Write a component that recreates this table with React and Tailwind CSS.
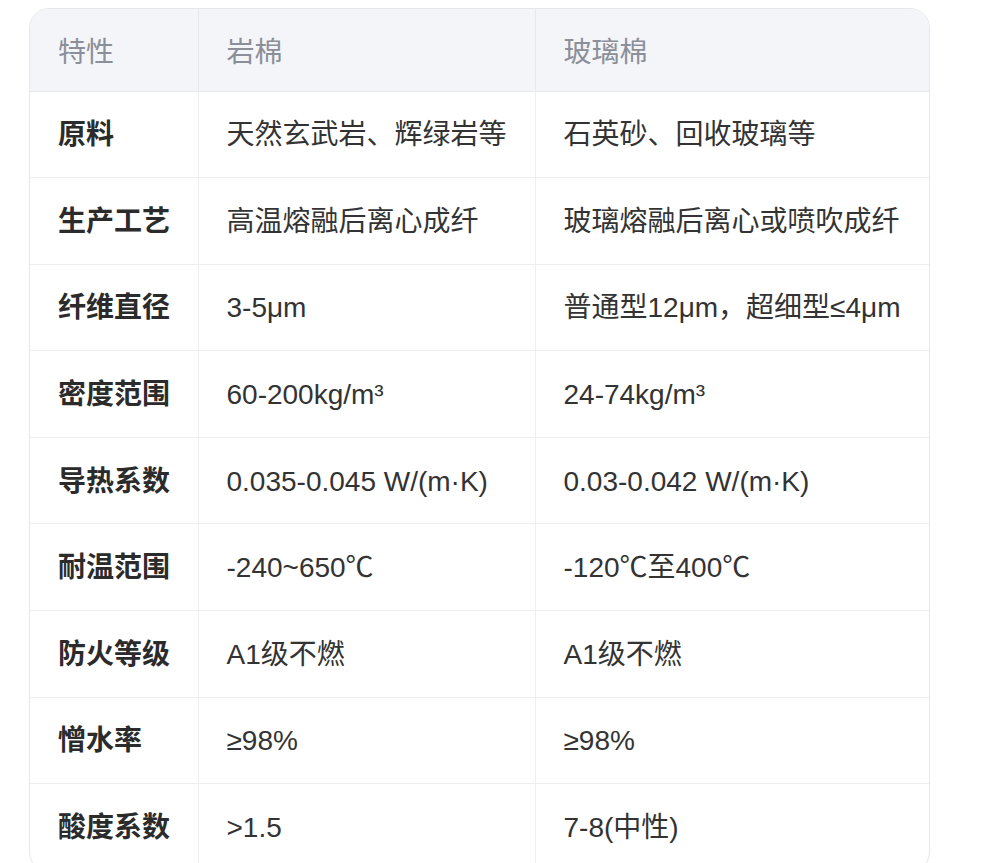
import React from "react";

const rows = [
  ["原料", "天然玄武岩、辉绿岩等", "石英砂、回收玻璃等"],
  ["生产工艺", "高温熔融后离心成纤", "玻璃熔融后离心或喷吹成纤"],
  ["纤维直径", "3-5μm", "普通型12μm，超细型≤4μm"],
  ["密度范围", "60-200kg/m³", "24-74kg/m³"],
  ["导热系数", "0.035-0.045 W/(m·K)", "0.03-0.042 W/(m·K)"],
  ["耐温范围", "-240~650℃", "-120℃至400℃"],
  ["防火等级", "A1级不燃", "A1级不燃"],
  ["憎水率", "≥98%", "≥98%"],
  ["酸度系数", ">1.5", "7-8(中性)"],
];

export default function App() {
  return (
    <div
      className="min-h-screen bg-white pl-[29px] pt-[8px]"
      style={{ fontFamily: '"Liberation Sans", "Noto Sans CJK SC", sans-serif' }}
    >
      <div className="w-[901px] rounded-[20px] border border-[#e6e7eb] overflow-hidden">
        <table className="w-full table-fixed border-collapse text-[28px]">
          <colgroup>
            <col className="w-[168px]" />
            <col className="w-[337px]" />
            <col />
          </colgroup>
          <thead>
            <tr className="h-[82px] bg-[#f4f5f8]">
              {["特性", "岩棉", "玻璃棉"].map((h, i) => (
                <th
                  key={h}
                  className={`pl-[28px] pr-0 pt-[6px] text-left font-normal text-[#8b8f99] border-b border-[#e8e9ec] whitespace-nowrap ${
                    i < 2 ? "border-r" : ""
                  }`}
                >
                  {h}
                </th>
              ))}
            </tr>
          </thead>
          <tbody>
            {rows.map((r, idx) => (
              <tr key={idx} className="h-[86.6px]">
                <td className="pl-[28px] pr-0 pt-[2px] font-bold text-[#2b2b2b] border-b border-r border-[#eeeff1] whitespace-nowrap">
                  {r[0]}
                </td>
                <td className="pl-[28px] pr-0 pt-[2px] text-[#333333] border-b border-r border-[#eeeff1] whitespace-nowrap">
                  {r[1]}
                </td>
                <td className="pl-[28px] pr-0 pt-[2px] text-[#333333] border-b border-[#eeeff1] whitespace-nowrap">
                  {r[2]}
                </td>
              </tr>
            ))}
          </tbody>
        </table>
      </div>
    </div>
  );
}
